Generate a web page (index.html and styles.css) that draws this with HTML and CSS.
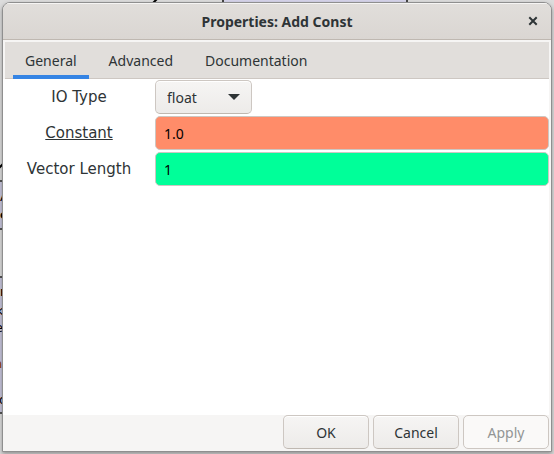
FILE: index.html
```html
<!DOCTYPE html>
<html lang="en">
<head>
<meta charset="utf-8">
<title>Properties: Add Const</title>
<link rel="stylesheet" href="styles.css">
</head>
<body>
<svg class="canvas" aria-hidden="true" width="554" height="454">
  <path d="M223 -4V8H407V-4Z" fill="#d6d4ea" stroke="#444" stroke-width="2"/>
  <path d="M153 3L159 -3" stroke="#000" stroke-width="2"/>
  <path d="M-2 169L4 163" stroke="#000" stroke-width="2"/>
  <path d="M-4 181H8V229H-4ZM-4 277H8V413H-4Z" fill="#c8c6dc" stroke="#555" stroke-width="2"/>
  <g class="canvas-text">
    <text x="0" y="201">A</text>
    <text class="strong" x="0" y="219">o</text>
    <text class="strong" x="0" y="296">n</text>
    <text x="-4" y="315">k</text>
    <text x="-5" y="332">e</text>
    <text class="accent" x="-6" y="368">n</text>
    <text x="-1" y="404">d</text>
  </g>
</svg>
<main class="window">
  <header class="titlebar">
    <h1>Properties: Add Const</h1>
    <button class="close" type="button" aria-label="Close">
      <svg width="10" height="10" viewBox="0 0 10 10"><path d="M2 2L8 8M8 2L2 8" stroke="#2e3436" stroke-width="2" stroke-linecap="square"/></svg>
    </button>
  </header>
  <nav class="tabs" role="tablist">
    <button class="tab active" type="button" role="tab" aria-selected="true">General</button>
    <button class="tab" type="button" role="tab" aria-selected="false">Advanced</button>
    <button class="tab" type="button" role="tab" aria-selected="false">Documentation</button>
  </nav>
  <form class="form" id="properties">
    <label for="type">IO Type</label>
    <div class="combo">
      <select id="type"><option>float</option></select>
      <svg class="arrow" width="12" height="6" viewBox="0 0 12 6"><path d="M0 0H12L6 6Z" fill="#2e3436"/></svg>
    </div>
    <label class="linked" for="constant">Constant</label>
    <input class="constant" id="constant" type="text" value="1.0">
    <label for="length">Vector Length</label>
    <input class="length" id="length" type="text" value="1">
  </form>
  <footer class="actions">
    <button type="button">OK</button>
    <button type="button">Cancel</button>
    <button type="button" disabled>Apply</button>
  </footer>
</main>
</body>
</html>
```
FILE: styles.css
```css
* { box-sizing: border-box; }

body {
  margin: 0;
  min-height: 100vh;
  padding: 2px;
  display: flex;
  background: #dcdcdc;
  color: #2e3436;
  font: 14px/20px "Noto Sans", sans-serif;
}

button, input, select { font: inherit; color: inherit; margin: 0; }

.canvas { position: absolute; left: 0; top: 0; width: 100%; height: 100%; }
.canvas-text { font: 13px "DejaVu Sans", sans-serif; }
.canvas-text .strong { font-weight: bold; }
.canvas-text .accent { fill: #8b3a00; }

.window {
  position: relative;
  flex: 1;
  display: flex;
  flex-direction: column;
  border: 1px solid #8f8f8f;
  border-radius: 8px 8px 0 0;
  background: #f6f5f4;
  box-shadow: 0 2px 4px rgba(0, 0, 0, 0.35);
  overflow: hidden;
}

.titlebar {
  display: grid;
  grid-template-columns: 36px 1fr 36px;
  align-items: center;
  height: 37px;
  border-bottom: 1px solid #bfb8b1;
  background: linear-gradient(#e1dedb, #dad6d2);
  box-shadow: inset 0 1px #f6f5f4;
}
.titlebar h1 {
  grid-column: 2;
  margin: 0;
  padding-top: 1px;
  font-size: 14px;
  line-height: 20px;
  text-align: center;
}
.close {
  display: flex;
  justify-content: center;
  padding: 0;
  border: 0;
  background: none;
}

.tabs {
  display: flex;
  gap: 8px;
  height: 37px;
  margin: 2px 2px 0;
  padding: 0 8px;
  border-bottom: 1px solid #cdc7c2;
  background: #e1dedb;
}
.tab {
  position: relative;
  padding: 2px 12px 0;
  border: 0;
  background: none;
}
.tab.active::after {
  content: "";
  position: absolute;
  inset: auto 0 -1px;
  height: 4px;
  background: #3584e4;
}

.form {
  flex: 1;
  display: grid;
  grid-template-columns: 152px 1fr;
  grid-auto-rows: 34px;
  align-content: start;
  gap: 2px 0;
  margin-right: 2px;
  padding-top: 1px;
  background: #fff;
}
.form label {
  align-self: center;
  text-align: center;
  font: 15px/20px "DejaVu Sans", sans-serif;
}
.form .linked { text-decoration: underline; }
.form input {
  width: 100%;
  padding: 2px 8px 0;
  border: 1px solid #cdc7c2;
  border-radius: 5px;
  color: #000;
}
.form .constant { background: #ff8c69; }
.form .length { background: #00ff99; }

.combo { position: relative; width: 97px; }
.combo select {
  appearance: none;
  width: 100%;
  height: 100%;
  padding: 2px 11px 0;
}
.arrow {
  position: absolute;
  right: 12px;
  top: 14px;
  pointer-events: none;
}

.combo select, .actions button {
  border: 1px solid #cdc7c2;
  border-bottom-color: #bfb8b1;
  border-radius: 5px;
  background: linear-gradient(#f6f5f4, #edebe9);
  box-shadow: inset 0 1px #fff;
}

.actions {
  display: flex;
  justify-content: flex-end;
  gap: 4px;
  padding: 0 2px 2px 0;
}
.actions button { width: 86px; height: 34px; padding: 2px 0 0; }
.actions button:disabled {
  border-color: #cdc7c2;
  background: #faf9f8;
  box-shadow: none;
  color: #929595;
}
```
